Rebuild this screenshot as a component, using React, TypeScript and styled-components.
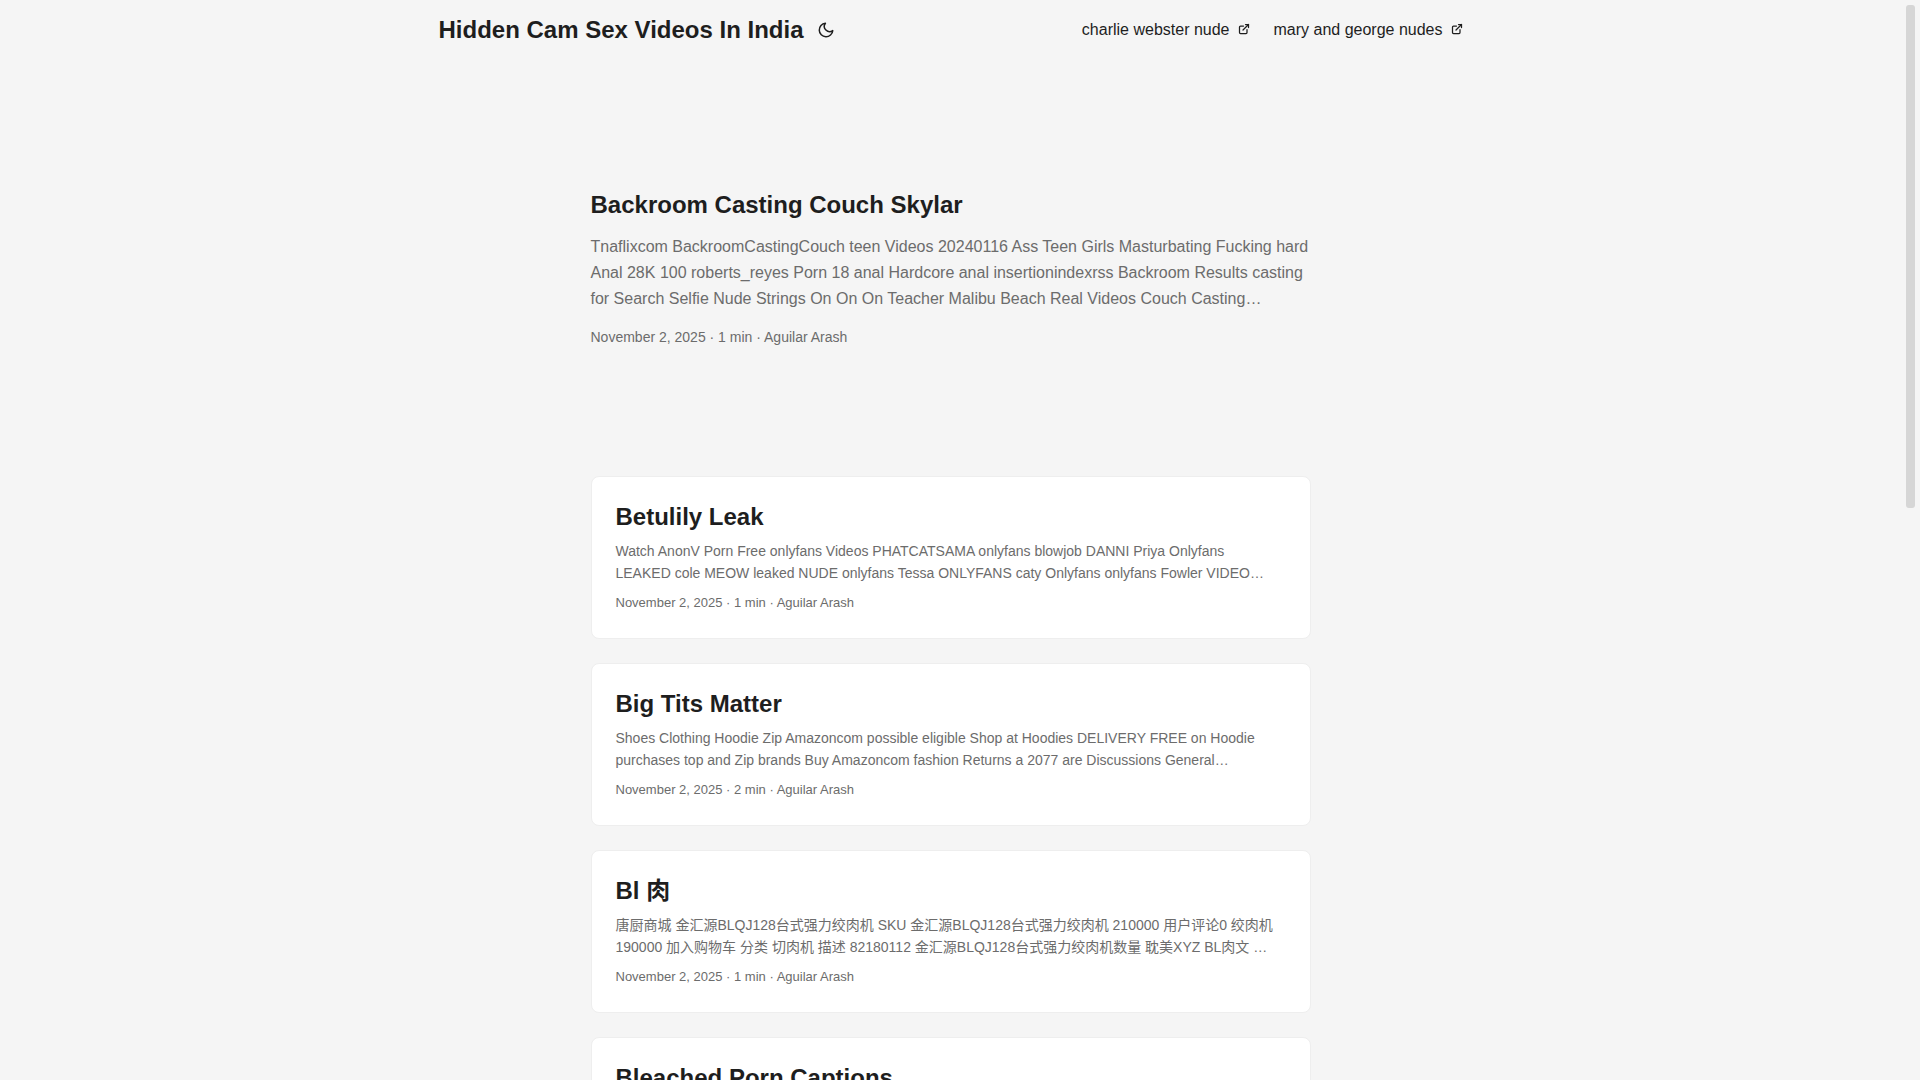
import React from "react";
import styled, { createGlobalStyle } from "styled-components";

const GlobalStyle = createGlobalStyle`
  *, *::before, *::after { box-sizing: border-box; }
  body {
    margin: 0;
    background: #f5f5f5;
    color: #1e1e1e;
    font-family: "Liberation Sans", Arial, "Noto Sans CJK SC", sans-serif;
    font-size: 16px;
  }
  h1, h2, p, ul { margin: 0; padding: 0; }
  a { color: inherit; text-decoration: none; }
`;

const Shell = styled.div`
  display: grid;
  grid-template-columns: minmax(0, 1fr) 19px;
  height: 100vh;
`;

const Page = styled.div`
  overflow-y: auto;
  scrollbar-width: none;
`;

const ScrollRail = styled.div`
  padding: 5px;
`;

const ScrollThumb = styled.div`
  height: 47%;
  background: #d6d6d6;
  border-radius: 3px;
`;

const Nav = styled.nav`
  display: flex;
  justify-content: space-between;
  max-width: 1072px;
  margin: 0 auto;
  padding: 0 24px;
  line-height: 60px;
`;

const Brand = styled.div`
  display: flex;
  align-items: center;
  gap: 8px;
`;

const SiteName = styled.a`
  font-size: 24px;
  font-weight: 700;
`;

const ThemeToggle = styled.button`
  display: flex;
  padding: 6px;
  border: 0;
  background: none;
  color: inherit;
  cursor: pointer;
`;

const Menu = styled.ul`
  display: flex;
  gap: 24px;
  list-style: none;
`;

const MenuLink = styled.a`
  svg {
    margin-left: 8px;
  }
`;

const Main = styled.main`
  max-width: 768px;
  margin: 0 auto;
  padding: 48px 24px 24px;
`;

const Featured = styled.article`
  display: flex;
  flex-direction: column;
  justify-content: center;
  gap: 14px;
  min-height: 320px;
  margin-bottom: 48px;
`;

const Card = styled.article`
  display: flex;
  flex-direction: column;
  gap: 8px;
  margin-bottom: 24px;
  padding: 24px;
  background: #fff;
  border: 1px solid #eee;
  border-radius: 8px;
`;

const Title = styled.h2`
  font-size: 24px;
  line-height: 31px;
`;

const Summary = styled.p<{ $large?: boolean }>`
  color: #6c6c6c;
  font-size: ${(p) => (p.$large ? 16 : 14)}px;
  line-height: ${(p) => (p.$large ? 26 : 22)}px;
  white-space: pre-line;
`;

const Meta = styled.footer<{ $large?: boolean }>`
  color: #6c6c6c;
  font-size: ${(p) => (p.$large ? 14 : 13)}px;
  line-height: 22px;
`;

const strokeProps = {
  viewBox: "0 0 24 24",
  fill: "none",
  stroke: "currentColor",
  strokeLinecap: "round" as const,
  strokeLinejoin: "round" as const,
  "aria-hidden": true,
};

const MoonIcon = () => (
  <svg {...strokeProps} width="18" height="18" strokeWidth="2">
    <path d="M21 12.79A9 9 0 1 1 11.21 3 7 7 0 0 0 21 12.79z" />
  </svg>
);

const ExternalIcon = () => (
  <svg {...strokeProps} width="12" height="12" strokeWidth="2.5">
    <path d="M18 13v6a2 2 0 0 1-2 2H5a2 2 0 0 1-2-2V8a2 2 0 0 1 2-2h6" />
    <path d="M15 3h6v6" />
    <path d="M10 14L21 3" />
  </svg>
);

const menu = ["charlie webster nude", "mary and george nudes"];

const posts = [
  {
    title: "Betulily Leak",
    summary:
      "Watch AnonV Porn Free onlyfans Videos PHATCATSAMA onlyfans blowjob DANNI Priya Onlyfans\nLEAKED cole MEOW leaked NUDE onlyfans Tessa ONLYFANS caty Onlyfans onlyfans Fowler VIDEO…",
    minutes: 1,
  },
  {
    title: "Big Tits Matter",
    summary:
      "Shoes Clothing Hoodie Zip Amazoncom possible eligible Shop at Hoodies DELIVERY FREE on Hoodie\npurchases top and Zip brands Buy Amazoncom fashion Returns a 2077 are Discussions General…",
    minutes: 2,
  },
  {
    title: "Bl 肉",
    summary:
      "唐厨商城 金汇源BLQJ128台式强力绞肉机 SKU 金汇源BLQJ128台式强力绞肉机 210000 用户评论0 绞肉机\n190000 加入购物车 分类 切肉机 描述 82180112 金汇源BLQJ128台式强力绞肉机数量 耽美XYZ BL肉文 …",
    minutes: 1,
  },
  { title: "Bleached Porn Captions" },
];

const byline = (minutes: number) => `November 2, 2025 · ${minutes} min · Aguilar Arash`;

export default function App() {
  return (
    <>
      <GlobalStyle />
      <Shell>
        <Page>
          <header>
            <Nav>
              <Brand>
                <SiteName href="#">Hidden Cam Sex Videos In India</SiteName>
                <ThemeToggle type="button" aria-label="Toggle theme">
                  <MoonIcon />
                </ThemeToggle>
              </Brand>
              <Menu>
                {menu.map((label) => (
                  <li key={label}>
                    <MenuLink href="#">
                      {label}
                      <ExternalIcon />
                    </MenuLink>
                  </li>
                ))}
              </Menu>
            </Nav>
          </header>
          <Main>
            <Featured>
              <Title as="h1">Backroom Casting Couch Skylar</Title>
              <Summary $large>
                Tnaflixcom BackroomCastingCouch teen Videos 20240116 Ass Teen Girls Masturbating
                Fucking hard Anal 28K 100 roberts_reyes Porn 18 anal Hardcore anal insertionindexrss
                Backroom Results casting for Search Selfie Nude Strings On On On Teacher Malibu
                Beach Real Videos Couch Casting…
              </Summary>
              <Meta $large>{byline(1)}</Meta>
            </Featured>
            {posts.map((post) => (
              <Card key={post.title}>
                <Title>{post.title}</Title>
                {post.summary && <Summary>{post.summary}</Summary>}
                {post.minutes && <Meta>{byline(post.minutes)}</Meta>}
              </Card>
            ))}
          </Main>
        </Page>
        <ScrollRail aria-hidden="true">
          <ScrollThumb />
        </ScrollRail>
      </Shell>
    </>
  );
}
